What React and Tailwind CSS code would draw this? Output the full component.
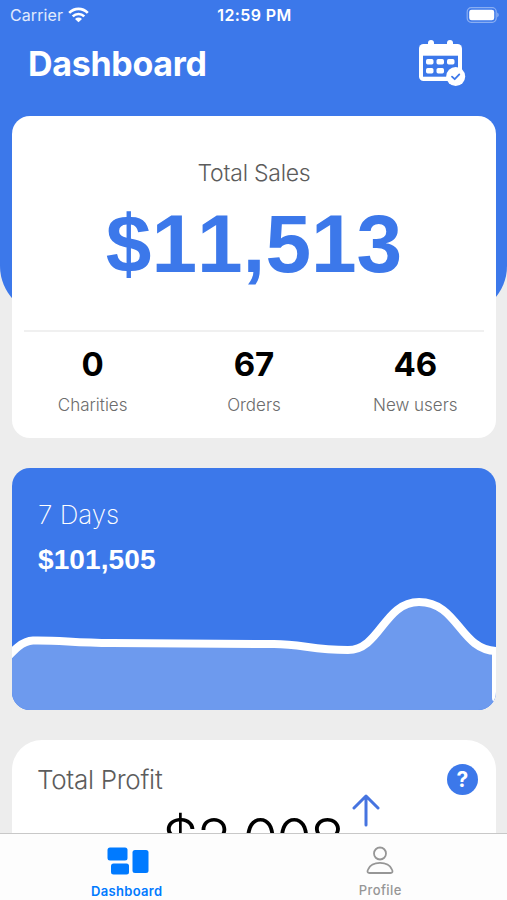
const stats = [
  { label: 'Charities', value: '0' },
  { label: 'Orders', value: '67' },
  { label: 'New users', value: '46' },
];

function StatusBar() {
  return (
    <div className="grid h-[30px] grid-cols-3 items-center pl-2.5 pr-2 text-white">
      <div className="flex items-center gap-[5px]">
        <span className="text-base tracking-[0.1px] text-white/85">Carrier</span>
        <svg width="21" height="16" viewBox="0 0 21 16" fill="none" stroke="white" strokeWidth="2.7">
          <path d="M1.2 5.9 C6.6 0.6 14.4 0.6 19.8 5.9" />
          <path d="M4.7 9.4 C8 6.2 13 6.2 16.3 9.4" />
          <path d="M10.5 15.3 L7 11.9 C9 10.1 12 10.1 14 11.9 Z" fill="white" stroke="none" />
        </svg>
      </div>
      <div className="whitespace-nowrap text-center text-base font-semibold tracking-[0.4px]">12:59 PM</div>
      <div className="flex justify-end">
        <svg width="33" height="16" viewBox="0 0 33 16">
          <rect x="1.2" y="0.7" width="29" height="14.6" rx="4" fill="none" stroke="white" strokeOpacity="0.4" strokeWidth="1.2" />
          <rect x="3.2" y="2.7" width="25" height="10.6" rx="2.4" fill="white" />
          <path d="M31.4 5.6 C33 6.4 33 9.6 31.4 10.4 Z" fill="white" fillOpacity="0.5" />
        </svg>
      </div>
    </div>
  );
}

function CalendarIcon() {
  return (
    <svg width="48" height="47" viewBox="0 0 48 47">
      <rect x="9" y="0" width="6" height="10" rx="3" fill="white" />
      <rect x="28" y="0" width="6" height="10" rx="3" fill="white" />
      <rect x="0" y="4" width="43" height="37" rx="4.5" fill="white" />
      <rect x="4" y="15.7" width="35" height="21" fill="#3c78ea" />
      <rect x="7" y="19" width="7.5" height="5.5" rx="1.7" fill="white" />
      <rect x="17.5" y="19" width="7.5" height="5.5" rx="1.7" fill="white" />
      <rect x="28" y="19" width="7.5" height="5.5" rx="1.7" fill="white" />
      <rect x="7" y="28" width="7.5" height="5.5" rx="1.7" fill="white" />
      <rect x="17.5" y="28" width="7.5" height="5.5" rx="1.7" fill="white" />
      <circle cx="36.7" cy="36.5" r="9.5" fill="white" />
      <path d="M33 36.6 L35.7 39.2 L40.3 34.4" fill="none" stroke="#3c78ea" strokeWidth="1.8" strokeLinecap="round" strokeLinejoin="round" />
    </svg>
  );
}

function SalesCard() {
  return (
    <div className="mx-3 -mt-[199.5px] h-[322.5px] w-[484px] rounded-[18px] bg-white px-3">
      <div className="pt-[42px] text-center text-[23px] leading-[30px] font-light tracking-[-0.25px] text-[#5c5c5c]">Total Sales</div>
      <div className="mt-[3px] h-[141px] border-b-2 border-[#f0f0f0] text-center font-['Liberation_Sans',Arial,sans-serif] text-[82px] leading-[106px] font-bold text-[#3c78ea] [font-kerning:none]">
        $11,513
      </div>
      <div className="-mx-3 grid grid-cols-3 pt-3 text-center">
        {stats.map((stat) => (
          <div key={stat.label}>
            <div className="text-[33px] leading-[40px] font-bold text-black">{stat.value}</div>
            <div className="mt-[9px] text-[17px] leading-6 font-light text-[#6c6c6c]">{stat.label}</div>
          </div>
        ))}
      </div>
    </div>
  );
}

function WeekCard() {
  return (
    <div className="mx-3 mt-[30px] h-[242px] w-[484px] overflow-hidden rounded-[18px] bg-[#3c78ea] text-white">
      <div className="px-[26px] pt-[30px]">
        <div className="text-[26px] leading-[34px] font-extralight">7 Days</div>
        <div className="mt-3 font-['Liberation_Sans',Arial,sans-serif] text-[28px] leading-8 font-bold tracking-[0.1px] [font-kerning:none]">$101,505</div>
      </div>
      <svg className="mt-[14px] block" width="484" height="120" viewBox="0 0 484 120">
        <path
          d="M-6 69 C2 60 10 51 21 50.5 C50 50 60 53 100 53 L262 54 C290 54 300 60 336 60 C368 60 372 12 407 12 C446 12 448 60 484 61 V140 H-6 Z"
          fill="#6d9aee"
        />
        <path
          d="M-6 69 C2 60 10 51 21 50.5 C50 50 60 53 100 53 L262 54 C290 54 300 60 336 60 C368 60 372 12 407 12 C446 12 448 60 484 61 V108"
          fill="none"
          stroke="white"
          strokeWidth="8"
          strokeLinecap="round"
        />
      </svg>
    </div>
  );
}

function ProfitCard() {
  return (
    <div className="mx-3 mt-[29.5px] h-[240px] w-[484px] rounded-[30px] bg-white">
      <div className="flex items-center justify-between pt-6 pr-[18px] pl-[25px]">
        <span className="text-[26px] leading-8 font-light tracking-[-0.3px] text-[#5c5c5c]">Total Profit</span>
        <span className="flex size-[31px] items-center justify-center rounded-full bg-[#3c78ea] text-[21px] font-bold text-white">?</span>
      </div>
      <div className="-mt-0.5 flex pl-[150px]">
        <span className="mt-2.5 w-[179px] whitespace-nowrap text-[58px] leading-[70px] font-[350] tracking-[-2.2px] text-black">$2,008</span>
        <svg className="ml-[10px]" width="30" height="34" viewBox="0 0 30 34" fill="none" stroke="#4674e0" strokeWidth="3" strokeLinecap="round" strokeLinejoin="round">
          <path d="M15 31 V2 M3 14 L15 2 L27 14" />
        </svg>
      </div>
    </div>
  );
}

function TabBar() {
  return (
    <nav className="grid h-[67px] shrink-0 grid-cols-2 border-t border-[#c8c8c8] bg-[#fdfdfd]">
      <div className="flex flex-col items-center pt-[13px] text-[#007aff]">
        <svg className="ml-0.5" width="42" height="28" viewBox="0 0 42 28" fill="currentColor">
          <rect x="0.5" y="0.5" width="20" height="13" rx="2.5" />
          <rect x="4" y="16.5" width="18" height="11" rx="2.5" />
          <rect x="25.5" y="3" width="16" height="23" rx="2.5" />
        </svg>
        <span className="mt-2 text-[13px] leading-4 font-semibold tracking-[0.3px]">Dashboard</span>
      </div>
      <div className="flex flex-col items-center pt-3 text-[#969696]">
        <svg width="28" height="29" viewBox="0 0 28 29" fill="none" stroke="currentColor" strokeWidth="1.8">
          <circle cx="14" cy="7.5" r="6" />
          <path d="M3.5 27 C1.5 27 1.2 25.6 1.8 24 C5 14.5 23 14.5 26.2 24 C26.8 25.6 26.5 27 24.5 27 Z" />
        </svg>
        <span className="mt-[7px] text-[13px] leading-4 font-medium tracking-[0.4px]">Profile</span>
      </div>
    </nav>
  );
}

export default function App() {
  return (
    <div className="flex h-[900px] w-[507px] flex-col overflow-hidden bg-[#ededed] font-['Inter',sans-serif]">
      <main className="min-h-0 flex-1 overflow-hidden">
        <header className="h-[315px] rounded-b-[49px] bg-[#3c78ea]">
          <StatusBar />
          <div className="flex items-start justify-between pt-2.5 pr-10 pl-7">
            <h1 className="mt-0.5 text-[34px] leading-[44px] font-bold tracking-[-0.3px] text-white">Dashboard</h1>
            <CalendarIcon />
          </div>
        </header>
        <SalesCard />
        <WeekCard />
        <ProfitCard />
      </main>
      <TabBar />
    </div>
  );
}
